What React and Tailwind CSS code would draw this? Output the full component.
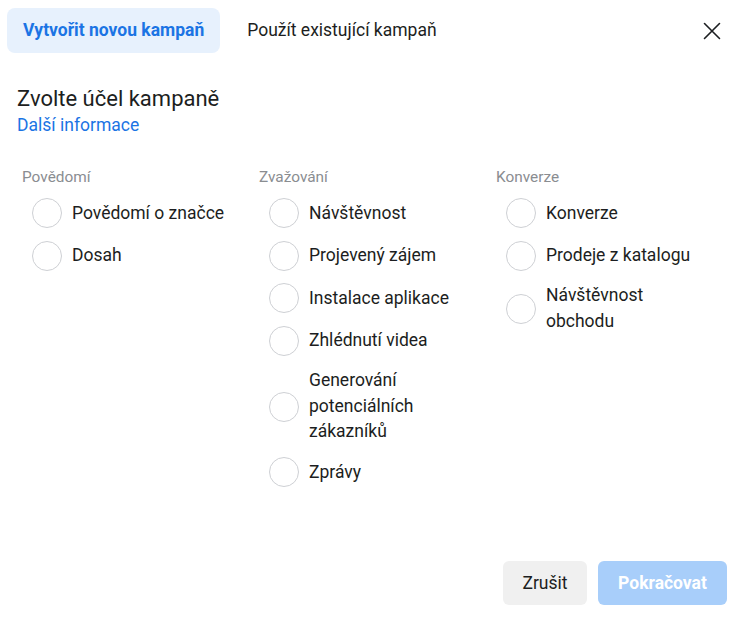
import { useState } from 'react';

const groups = [
  {
    title: 'Povědomí',
    items: ['Povědomí o značce', 'Dosah'],
  },
  {
    title: 'Zvažování',
    items: [
      'Návštěvnost',
      'Projevený zájem',
      'Instalace aplikace',
      'Zhlédnutí videa',
      'Generování potenciálních zákazníků',
      'Zprávy',
    ],
  },
  {
    title: 'Konverze',
    items: ['Konverze', 'Prodeje z katalogu', 'Návštěvnost obchodu'],
  },
];

function CloseIcon() {
  return (
    <svg width="18" height="18" viewBox="0 0 18 18" fill="none">
      <path d="M1.5 1.5 16.5 16.5M16.5 1.5 1.5 16.5" stroke="#1c1e21" strokeWidth="1.6" strokeLinecap="round" />
    </svg>
  );
}

export default function App() {
  const [tab, setTab] = useState('new');
  const [selected, setSelected] = useState(null);

  return (
    <div className="flex min-h-[619px] flex-col bg-white font-['Roboto',sans-serif] text-[#1c1e21]">
      <div className="flex items-center justify-between pl-[7px] pr-[18px] pt-[8px]">
        <div className="flex gap-[11px]">
          <button
            onClick={() => setTab('new')}
            className={`h-[45px] rounded-[8px] px-[16px] text-[17.5px] ${
              tab === 'new' ? 'bg-[#e7f1fd] font-bold text-[#1b74e4]' : 'text-[#1c1e21]'
            }`}
          >
            Vytvořit novou kampaň
          </button>
          <button
            onClick={() => setTab('existing')}
            className={`h-[45px] rounded-[8px] px-[16px] text-[17.5px] ${
              tab === 'existing' ? 'bg-[#e7f1fd] font-bold text-[#1b74e4]' : 'text-[#1c1e21]'
            }`}
          >
            Použít existující kampaň
          </button>
        </div>
        <button className="flex h-8 w-8 items-center justify-center" aria-label="Zavřít">
          <CloseIcon />
        </button>
      </div>

      <div className="px-[17px] pt-[33px]">
        <h2 className="text-[22px] leading-[26px]">Zvolte účel kampaně</h2>
        <a href="#" className="mt-[3px] block text-[17.5px] leading-[20px] text-[#1b74e4]">
          Další informace
        </a>
      </div>

      <div className="grid grid-cols-[237px_237px_237px] px-[22px] pt-[33px]">
        {groups.map((g) => (
          <div key={g.title}>
            <div className="text-[15.4px] leading-[18px] text-[#8a8d91]">{g.title}</div>
            <div className="mt-[6px]">
              {g.items.map((item) => (
                <label
                  key={item}
                  className="flex cursor-pointer items-center gap-[10px] py-[6.25px] pl-[10px]"
                  onClick={() => setSelected(item)}
                >
                  <span
                    className={`h-[30px] w-[30px] shrink-0 rounded-full border ${
                      selected === item ? 'border-[8px] border-[#1b74e4]' : 'border-[#ced0d4]'
                    }`}
                  />
                  <span className="max-w-[160px] text-[17.5px] leading-[25.5px]">{item}</span>
                </label>
              ))}
            </div>
          </div>
        ))}
      </div>

      <div className="mt-auto flex justify-end gap-[11px] pb-[14px] pr-[19px]">
        <button className="h-[44px] w-[84px] rounded-[6px] bg-[#f0f0f0] text-[17.5px]">Zrušit</button>
        <button
          disabled={!selected}
          className="h-[44px] w-[129px] rounded-[6px] bg-[#a8cefa] text-[17.5px] font-bold text-white"
        >
          Pokračovat
        </button>
      </div>
    </div>
  );
}
